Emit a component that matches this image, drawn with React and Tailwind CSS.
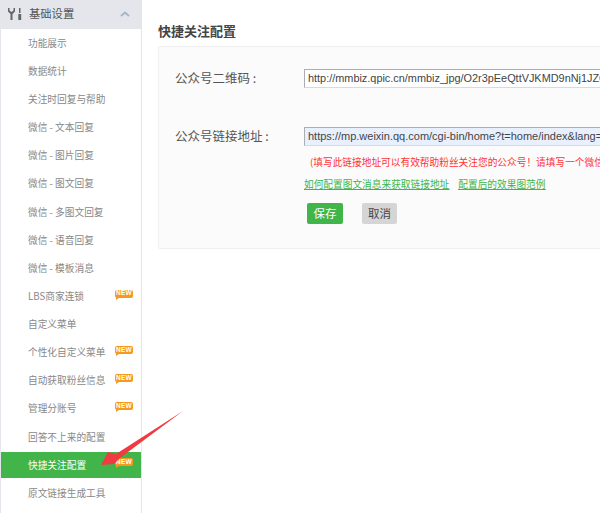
const menu = [
  { label: '功能展示' },
  { label: '数据统计' },
  { label: '关注时回复与帮助' },
  { label: '微信 - 文本回复' },
  { label: '微信 - 图片回复' },
  { label: '微信 - 图文回复' },
  { label: '微信 - 多图文回复' },
  { label: '微信 - 语音回复' },
  { label: '微信 - 模板消息' },
  { label: 'LBS商家连锁', isNew: true },
  { label: '自定义菜单' },
  { label: '个性化自定义菜单', isNew: true },
  { label: '自动获取粉丝信息', isNew: true },
  { label: '管理分账号', isNew: true },
  { label: '回答不上来的配置' },
  { label: '快捷关注配置', isNew: true, active: true },
  { label: '原文链接生成工具' },
];

function NewBadge({ active }) {
  return (
    <span
      className={`absolute right-[8px] flex h-[8px] w-[18px] items-center justify-center rounded-[2px] bg-[#f39a1f] font-['Liberation_Sans',sans-serif] text-[6.5px] font-bold leading-none tracking-[0.3px] text-white ${
        active ? 'top-[6px]' : 'top-[7.5px]'
      }`}
    >
      NEW
      <span className="absolute bottom-[-2px] left-[1px] h-0 w-0 border-r-[3px] border-t-[2px] border-r-transparent border-t-[#f39a1f]" />
    </span>
  );
}

export default function App() {
  return (
    <div className="relative flex h-[513px] w-[600px] overflow-hidden bg-white font-['Noto_Sans_CJK_SC','Open_Sans',sans-serif]">
      <aside className="h-full w-[142px] shrink-0 border-l border-r border-[#e4e6eb]">
        <div className="-ml-[1px] flex h-[29px] items-center bg-[#e4e6eb] pb-[1px] pl-[8px] pr-[11px] text-[#555]">
          <svg width="15" height="12" viewBox="0 0 15 12" fill="#666">
            <path d="M0 0 L1.5 0 L1.5 2.5 L3.5 4 L5.5 2.5 L5.5 0 L7 0 L7 3.5 L4.5 6 L4.5 12 L2.5 12 L2.5 6 L0 3.5 Z" />
            <path d="M11 0 L12.5 0 L12.5 5 L11 5 Z" />
            <path d="M10.3 6 L13.2 6 L13.2 12 L10.3 12 Z" />
          </svg>
          <span className="ml-[6px] text-[11.3px] leading-none">基础设置</span>
          <svg className="ml-auto" width="10" height="6" viewBox="0 0 10 6" fill="none" stroke="#a9b6c4" strokeWidth="2">
            <path d="M1 5 L5 1.5 L9 5" />
          </svg>
        </div>
        <ul>
          {menu.map((item) => (
            <li
              key={item.label}
              className={`relative flex h-[28.13px] items-center whitespace-nowrap pl-[27px] text-[9.7px] ${
                item.active ? 'border-y border-white bg-[#41b549] text-white' : 'text-[#888]'
              }`}
            >
              {item.label}
              {item.isNew && <NewBadge active={item.active} />}
            </li>
          ))}
        </ul>
      </aside>

      <main className="min-w-0 flex-1 pl-[16px] pt-[22px]">
        <h1 className="text-[13px] font-bold leading-[18px] text-[#444]">快捷关注配置</h1>
        <section className="mt-[6px] h-[203px] w-[500px] rounded-[2px] border border-[#f0f0f0] bg-[#fbfbfb] pl-[16px] pt-[22px]">
          <div className="flex h-[19px] items-center">
            <label className="w-[129px] shrink-0 text-[12.5px] text-[#555]">公众号二维码 :</label>
            <div className="h-[19px] w-[400px] overflow-hidden whitespace-nowrap border border-[#d8dade] border-l-[#a9adb5] border-t-[#a9adb5] bg-white pl-[3px] font-['Liberation_Sans',sans-serif] text-[10.9px] leading-[17px] text-[#444]">
              http://mmbiz.qpic.cn/mmbiz_jpg/O2r3pEeQttVJKMD9nNj1JZG0
            </div>
          </div>
          <div className="mt-[39px] flex h-[19px] items-center">
            <label className="w-[129px] shrink-0 text-[12.5px] text-[#555]">公众号链接地址 :</label>
            <div className="h-[19px] w-[400px] overflow-hidden whitespace-nowrap border border-[#d8dade] border-l-[#a9adb5] border-t-[#a9adb5] bg-[#e8f0fe] pl-[3px] font-['Liberation_Sans',sans-serif] text-[11px] leading-[17px] text-[#444]">
              https://mp.weixin.qq.com/cgi-bin/home?t=home/index&amp;lang=
            </div>
          </div>
          <p className="mt-[7px] whitespace-nowrap pl-[135px] text-[9.7px] leading-[18px] text-[#f33]">
            (填写此链接地址可以有效帮助粉丝关注您的公众号！请填写一个微信
          </p>
          <div className="mt-[5px] flex gap-[9px] pl-[129px] text-[9.7px] leading-[16px] text-[#41b549] underline">
            <a>如何配置图文消息来获取链接地址</a>
            <a>配置后的效果图范例</a>
          </div>
          <div className="mt-[11px] flex gap-[19px] pl-[132px]">
            <button className="h-[21px] w-[36px] rounded-[2px] bg-[#41b549] text-[11.5px] leading-none text-white">保存</button>
            <button className="h-[21px] w-[35px] rounded-[2px] bg-[#d5d5d5] text-[11.5px] leading-none text-[#444]">取消</button>
          </div>
        </section>
      </main>

      <svg className="absolute left-[95px] top-[405px]" width="95" height="75" viewBox="0 0 95 75">
        <path d="M88 6 L25 53 L19 59 L6 60 L13 47 L21 49 Z" fill="#ee3c42" />
      </svg>
    </div>
  );
}
